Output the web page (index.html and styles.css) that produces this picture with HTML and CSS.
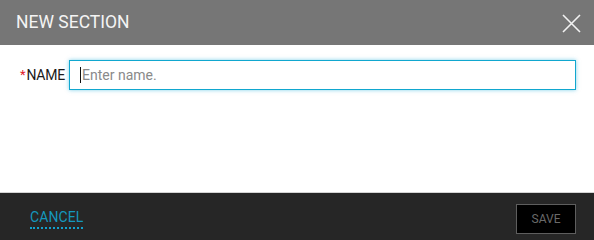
FILE: index.html
```html
<!DOCTYPE html>
<html>
<head>
<meta charset="utf-8">
<link rel="stylesheet" href="styles.css">
</head>
<body>
<div class="dialog">
  <header class="head">
    <h1 class="title">NEW SECTION</h1>
    <button class="close" aria-label="Close">
      <svg width="19" height="19" viewBox="0 0 19 19"><path d="M1 1L18 18M18 1L1 18" stroke="#f2f2f2" stroke-width="1.6" fill="none"/></svg>
    </button>
  </header>
  <main class="body">
    <div class="row">
      <label class="label"><span class="req">*</span>NAME</label>
      <div class="field"><span class="caret"></span><span class="ph">Enter name.</span></div>
    </div>
  </main>
  <footer class="foot">
    <a class="cancel">CANCEL</a>
    <button class="save">SAVE</button>
  </footer>
</div>
</body>
</html>
```
FILE: styles.css
```css
html, body { margin: 0; padding: 0; }
body { width: 594px; height: 240px; overflow: hidden; font-family: Roboto, "Liberation Sans", sans-serif; background: #fff; }
.dialog { display: flex; flex-direction: column; height: 240px; }
.head { height: 45px; background: #767676; display: flex; align-items: center; justify-content: space-between; padding: 0 13px 0 16px; box-sizing: border-box; }
.title { margin: 0; font-size: 17.5px; font-weight: 400; color: #f4f4f4; letter-spacing: 0; line-height: 1; padding-top: 1px; }
.close { background: none; border: 0; padding: 0; width: 19px; height: 19px; display: flex; margin-top: 1px; }
.body { flex: 1; border-bottom: 1px solid #d4d4d4; }
.row { display: flex; align-items: center; padding: 15px 18px 0 20px; }
.label { font-size: 14px; color: #1a1a1a; display: flex; align-items: center; width: 49px; letter-spacing: -0.2px; }
.req { color: #e0202a; font-size: 13px; margin-right: 1px; position: relative; top: -1px; }
.field { flex: 1; height: 30px; box-sizing: border-box; border: 1px solid #11a7cf; box-shadow: 0 0 4px rgba(20,170,215,0.55); display: flex; align-items: center; padding-left: 10px; }
.caret { width: 1px; height: 16px; background: #111; margin-right: 1px; }
.ph { font-size: 14px; color: #8a8a8a; letter-spacing: 0; }
.foot { height: 47px; background: #262626; display: flex; align-items: center; justify-content: space-between; padding: 0 18px 0 30px; }
.cancel { font-size: 14px; color: #1597bd; letter-spacing: 0.1px; border-bottom: 2px dotted #12a0cc; padding-bottom: 3px; line-height: 1; margin-top: 6px; }
.save { width: 60px; height: 30px; background: #000; border: 1px solid #5e5e5e; color: #6a6a6a; font-family: Roboto, "Liberation Sans", sans-serif; font-size: 12px; padding: 0; margin-top: 4px; }
```
